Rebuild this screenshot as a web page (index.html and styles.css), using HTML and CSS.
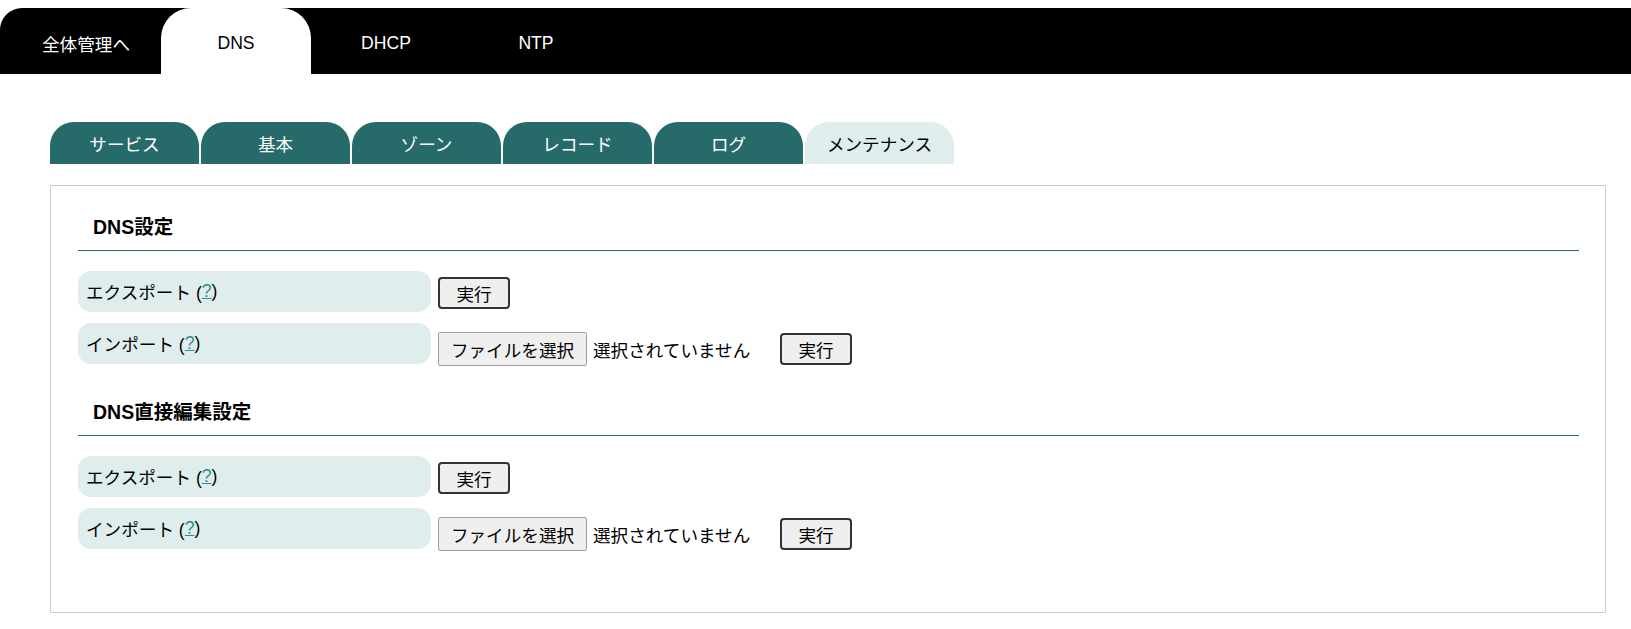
FILE: index.html
```html
<!DOCTYPE html>
<html lang="ja">
<head>
<meta charset="utf-8">
<title>DNS メンテナンス</title>
<link rel="stylesheet" href="styles.css">
</head>
<body>
<nav class="topnav">
  <a class="toptab" href="#">全体管理へ</a>
  <a class="toptab active" href="#">DNS</a>
  <a class="toptab" href="#">DHCP</a>
  <a class="toptab" href="#">NTP</a>
</nav>

<main class="main">
  <ul class="subtabs">
    <li class="subtab">サービス</li>
    <li class="subtab">基本</li>
    <li class="subtab">ゾーン</li>
    <li class="subtab">レコード</li>
    <li class="subtab">ログ</li>
    <li class="subtab active">メンテナンス</li>
  </ul>

  <section class="panel">
    <h2 class="heading">DNS設定</h2>
    <div class="rows">
      <div class="row">
        <div class="label">エクスポート (<a class="help" href="#">?</a>)</div>
        <button class="run">実行</button>
      </div>
      <div class="row import">
        <div class="label">インポート (<a class="help" href="#">?</a>)</div>
        <span class="file-btn">ファイルを選択</span>
        <span class="file-name">選択されていません</span>
        <button class="run">実行</button>
      </div>
    </div>

    <h2 class="heading second">DNS直接編集設定</h2>
    <div class="rows">
      <div class="row">
        <div class="label">エクスポート (<a class="help" href="#">?</a>)</div>
        <button class="run">実行</button>
      </div>
      <div class="row import">
        <div class="label">インポート (<a class="help" href="#">?</a>)</div>
        <span class="file-btn">ファイルを選択</span>
        <span class="file-name">選択されていません</span>
        <button class="run">実行</button>
      </div>
    </div>
  </section>
</main>
</body>
</html>
```

FILE: styles.css
```css
* { box-sizing: border-box; }

html, body {
  background: #ffffff;
}

body {
  margin: 8px 0 0 0;
  font-family: "Liberation Sans", "Noto Sans CJK JP", sans-serif;
  font-size: 17.6px;
  color: #000;
}

.topnav {
  display: flex;
  height: 66px;
  background: #000;
  border-top-left-radius: 22px;
  padding-left: 11px;
}

.toptab {
  width: 150px;
  display: flex;
  align-items: center;
  justify-content: center;
  padding-top: 5px;
  color: #fff;
  text-decoration: none;
  font-size: 17.6px;
  border-radius: 30px 30px 0 0;
}

.toptab.active {
  background: #fff;
  color: #000;
}

.main {
  padding: 48px 0 0 50px;
}

.subtabs {
  list-style: none;
  margin: 0;
  padding: 0;
  display: flex;
  gap: 2px;
}

.subtab {
  width: 149px;
  height: 42px;
  display: flex;
  align-items: center;
  justify-content: center;
  background: #266a6a;
  color: #fff;
  border-radius: 24px 24px 0 0;
  font-size: 17.6px;
}

.subtab.active {
  background: #e0eded;
  color: #000;
}

.panel {
  margin-top: 21px;
  width: 1556px;
  height: 428px;
  border: 1px solid #cccccc;
  padding: 28px 26px 0 27px;
}

.heading {
  margin: 0;
  padding: 0 15px 10px;
  font-size: 19.5px;
  line-height: 26px;
  font-weight: bold;
  border-bottom: 1px solid #306868;
}

.heading.second {
  margin-top: 35px;
}

.rows {
  margin-top: 20px;
  display: flex;
  flex-direction: column;
  gap: 11px;
}

.row {
  display: flex;
  align-items: flex-start;
  height: 41px;
}

.label {
  width: 353px;
  height: 41px;
  background: #e0eded;
  border-radius: 13px;
  padding-left: 8px;
  display: flex;
  align-items: center;
  margin-right: 7px;
  flex: none;
}

.help {
  color: #2a8c9c;
  text-decoration: underline;
}

.run {
  font-family: "Liberation Sans", "Noto Sans CJK JP", sans-serif;
  font-size: 17.6px;
  width: 72px;
  height: 32px;
  margin-top: 6px;
  padding: 0;
  background: #efefef;
  border: 2px solid #333;
  border-radius: 4px;
  color: #000;
}

.import .run {
  margin-top: 10px;
}

.file-btn {
  width: 149px;
  height: 34px;
  margin-top: 9px;
  display: inline-flex;
  align-items: center;
  justify-content: center;
  background: #efefef;
  border: 1px solid #a0a0a0;
  border-radius: 2px;
  font-size: 17.6px;
}

.file-name {
  margin-left: 6px;
  width: 187px;
  height: 34px;
  margin-top: 9px;
  display: inline-flex;
  align-items: center;
}
```
